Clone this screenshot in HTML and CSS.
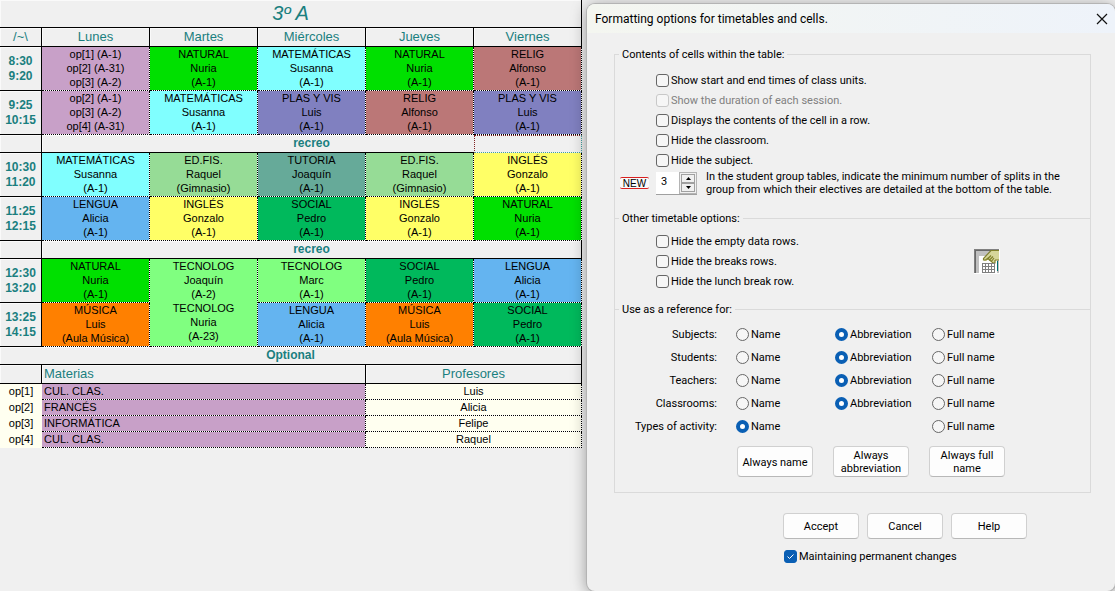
FILE: index.html
```html
<!DOCTYPE html>
<html lang="en">
<head>
<meta charset="utf-8">
<title>Formatting options for timetables and cells.</title>
<link rel="stylesheet" href="styles.css">
</head>
<body>
<main class="desktop">
  <section class="sheet" lang="es">
    <table class="grid">
      <colgroup><col class="col-time"><col><col><col><col><col></colgroup>
      <thead>
        <tr class="title-row"><th colspan="6">3º A</th></tr>
        <tr class="days"><th>/~\</th><th>Lunes</th><th>Martes</th><th>Miércoles</th><th>Jueves</th><th>Viernes</th></tr>
      </thead>
      <tbody>
        <tr class="slot"><th>8:30<br>9:20</th>
          <td class="optional">op[1] (A-1)<br>op[2] (A-31)<br>op[3] (A-2)</td>
          <td class="natural">NATURAL<br>Nuria<br>(A-1)</td>
          <td class="maths">MATEMÁTICAS<br>Susanna<br>(A-1)</td>
          <td class="natural">NATURAL<br>Nuria<br>(A-1)</td>
          <td class="relig">RELIG<br>Alfonso<br>(A-1)</td></tr>
        <tr class="slot"><th>9:25<br>10:15</th>
          <td class="optional">op[2] (A-1)<br>op[3] (A-2)<br>op[4] (A-31)</td>
          <td class="maths">MATEMÁTICAS<br>Susanna<br>(A-1)</td>
          <td class="plastic">PLAS Y VIS<br>Luis<br>(A-1)</td>
          <td class="relig">RELIG<br>Alfonso<br>(A-1)</td>
          <td class="plastic">PLAS Y VIS<br>Luis<br>(A-1)</td></tr>
        <tr class="break"><th></th><th colspan="5" class="has-cursor">recreo<span class="cell-cursor"></span></th></tr>
        <tr class="slot"><th>10:30<br>11:20</th>
          <td class="maths">MATEMÁTICAS<br>Susanna<br>(A-1)</td>
          <td class="sport">ED.FIS.<br>Raquel<br>(Gimnasio)</td>
          <td class="tutor">TUTORIA<br>Joaquín<br>(A-1)</td>
          <td class="sport">ED.FIS.<br>Raquel<br>(Gimnasio)</td>
          <td class="english">INGLÉS<br>Gonzalo<br>(A-1)</td></tr>
        <tr class="slot"><th>11:25<br>12:15</th>
          <td class="lengua">LENGUA<br>Alicia<br>(A-1)</td>
          <td class="english">INGLÉS<br>Gonzalo<br>(A-1)</td>
          <td class="social">SOCIAL<br>Pedro<br>(A-1)</td>
          <td class="english">INGLÉS<br>Gonzalo<br>(A-1)</td>
          <td class="natural">NATURAL<br>Nuria<br>(A-1)</td></tr>
        <tr class="break"><th></th><th colspan="5">recreo</th></tr>
        <tr class="slot"><th>12:30<br>13:20</th>
          <td class="natural">NATURAL<br>Nuria<br>(A-1)</td>
          <td class="tech" rowspan="2">TECNOLOG<br>Joaquín<br>(A-2)<br>TECNOLOG<br>Nuria<br>(A-23)</td>
          <td class="tech">TECNOLOG<br>Marc<br>(A-1)</td>
          <td class="social">SOCIAL<br>Pedro<br>(A-1)</td>
          <td class="lengua">LENGUA<br>Alicia<br>(A-1)</td></tr>
        <tr class="slot"><th>13:25<br>14:15</th>
          <td class="music">MÚSICA<br>Luis<br>(Aula Música)</td>
          <td class="lengua">LENGUA<br>Alicia<br>(A-1)</td>
          <td class="music">MÚSICA<br>Luis<br>(Aula Música)</td>
          <td class="social">SOCIAL<br>Pedro<br>(A-1)</td></tr>
      </tbody>
    </table>
    <table class="grid">
      <colgroup><col class="col-time"><col class="col-subject"><col></colgroup>
      <thead>
        <tr class="break"><th colspan="3">Optional</th></tr>
        <tr class="days"><th></th><th class="start">Materias</th><th>Profesores</th></tr>
      </thead>
      <tbody>
        <tr class="option"><td class="code">op[1]</td><td class="optional start">CUL. CLAS.</td><td class="teacher">Luis</td></tr>
        <tr class="option"><td class="code">op[2]</td><td class="optional start">FRANCÉS</td><td class="teacher">Alicia</td></tr>
        <tr class="option"><td class="code">op[3]</td><td class="optional start">INFORMÁTICA</td><td class="teacher">Felipe</td></tr>
        <tr class="option"><td class="code">op[4]</td><td class="optional start">CUL. CLAS.</td><td class="teacher">Raquel</td></tr>
      </tbody>
    </table>
  </section>

  <section class="dialog" role="dialog" aria-labelledby="dlg-title">
    <header class="titlebar">
      <h1 id="dlg-title">Formatting options for timetables and cells.</h1>
      <button type="button" class="close" aria-label="Close"><svg width="12" height="12" viewBox="0 0 12 12"><path d="M1 1l10 10M11 1L1 11" fill="none" stroke="#111" stroke-width="1.2"/></svg></button>
    </header>
    <form class="form">
      <fieldset class="group contents">
        <legend>Contents of cells within the table:</legend>
        <div class="checks">
          <label class="option-line"><input type="checkbox">Show start and end times of class units.</label>
          <label class="option-line disabled"><input type="checkbox" disabled>Show the duration of each session.</label>
          <label class="option-line"><input type="checkbox">Displays the contents of the cell in a row.</label>
          <label class="option-line"><input type="checkbox">Hide the classroom.</label>
          <label class="option-line"><input type="checkbox">Hide the subject.</label>
        </div>
        <div class="splits">
          <span class="new">NEW</span>
          <div class="spinner">
            <input type="text" id="splits" value="3">
            <div class="arrows">
              <button type="button" aria-label="Increase"><svg width="5" height="3" viewBox="0 0 5 3"><path d="M0 3L2.500 0L5 3z"/></svg></button>
              <button type="button" aria-label="Decrease"><svg width="5" height="3" viewBox="0 0 5 3"><path d="M0 0L2.500 3L5 0z"/></svg></button>
            </div>
          </div>
          <label for="splits" class="splits-text">In the student group tables, indicate the minimum number of splits in the<br>group from which their electives are detailed at the bottom of the table.</label>
        </div>
      </fieldset>
      <fieldset class="group others">
        <legend>Other timetable options:</legend>
        <div class="others-body">
          <div class="checks">
            <label class="option-line"><input type="checkbox">Hide the empty data rows.</label>
            <label class="option-line"><input type="checkbox">Hide the breaks rows.</label>
            <label class="option-line"><input type="checkbox">Hide the lunch break row.</label>
          </div>
          <button type="button" class="table-tool" aria-label="Table format">
            <svg width="26" height="25" viewBox="0 0 26 25" shape-rendering="crispEdges">
              <path fill="#fff" d="M0 0h26v25H0z"/>
              <path fill="#c0c0c0" d="M0 0h25v24H0z"/>
              <path fill="#808080" d="M0 0h25v1H0zM0 0h1v24H0z"/>
              <path fill="#686868" d="M1 1h24v1H1zM1 1h1v23H1z"/>
              <path fill="#fff" d="M5 7h18v17H5z"/>
              <path fill="#007070" d="M23 12h1v10h-1z"/>
              <path fill="#d6d69a" d="M17 2h8v9h-3l-1 3h-3l-3-3-5 1V9l3-2z"/>
              <path fill="none" stroke="#80802c" stroke-width="1.200" shape-rendering="auto" d="M25 1.500h-8L9.500 9.500v1.500h2l4-3M13 10.500l4-4M15 11.500l4-4M17 13l3-4M14 9.500l5 4.500h2v-3M25 11h-4"/>
              <path fill="#808080" d="M8 14h13v10H8z"/>
              <path fill="#fff" d="M9 15h2v2H9zm3 0h2v2h-2zm3 0h2v2h-2zm3 0h2v2h-2zM9 18h2v2H9zm3 0h2v2h-2zm3 0h2v2h-2zm3 0h2v2h-2zM9 21h2v2H9zm3 0h2v2h-2zm3 0h2v2h-2zm3 0h2v2h-2z"/>
            </svg>
          </button>
        </div>
      </fieldset>
      <fieldset class="group reference">
        <legend>Use as a reference for:</legend>
        <div class="choices">
          <div class="choice" role="radiogroup" aria-labelledby="r1"><span id="r1">Subjects:</span>
            <label><input type="radio" name="subjects">Name</label><label><input type="radio" name="subjects" checked>Abbreviation</label><label><input type="radio" name="subjects">Full name</label></div>
          <div class="choice" role="radiogroup" aria-labelledby="r2"><span id="r2">Students:</span>
            <label><input type="radio" name="students">Name</label><label><input type="radio" name="students" checked>Abbreviation</label><label><input type="radio" name="students">Full name</label></div>
          <div class="choice" role="radiogroup" aria-labelledby="r3"><span id="r3">Teachers:</span>
            <label><input type="radio" name="teachers">Name</label><label><input type="radio" name="teachers" checked>Abbreviation</label><label><input type="radio" name="teachers">Full name</label></div>
          <div class="choice" role="radiogroup" aria-labelledby="r4"><span id="r4">Classrooms:</span>
            <label><input type="radio" name="classrooms">Name</label><label><input type="radio" name="classrooms" checked>Abbreviation</label><label><input type="radio" name="classrooms">Full name</label></div>
          <div class="choice" role="radiogroup" aria-labelledby="r5"><span id="r5">Types of activity:</span>
            <label><input type="radio" name="activity" checked>Name</label><label class="last"><input type="radio" name="activity">Full name</label></div>
        </div>
        <div class="presets">
          <button type="button" class="btn">Always name</button>
          <button type="button" class="btn">Always abbreviation</button>
          <button type="button" class="btn">Always full name</button>
        </div>
      </fieldset>
      <div class="actions">
        <button type="submit" class="btn">Accept</button>
        <button type="button" class="btn">Cancel</button>
        <button type="button" class="btn">Help</button>
      </div>
      <label class="option-line keep"><input type="checkbox" checked>Maintaining permanent changes</label>
    </form>
  </section>
</main>
</body>
</html>
```
FILE: styles.css
```css
* {
  box-sizing: border-box;
}

body {
  margin: 0;
  background: #f0f0f0;
  color: #000;
  font: 11px/14px "Liberation Sans", Arial, sans-serif;
}

.desktop {
  display: grid;
  grid-template-columns: 587fr 528fr;
  min-height: 100vh;
  overflow: hidden;
}

.sheet {
  padding-right: 5px;
}

/* Timetable */
.grid {
  width: 100%;
  table-layout: fixed;
  border-collapse: separate;
  border-spacing: 0;
  background: #fff;
}

.col-time {
  width: 42px;
}

.col-subject {
  width: 324px;
}

.grid th,
.grid td {
  padding: 0;
  border: 0 solid #000;
  border-width: 0 1px 1px 0;
  text-align: center;
}

.grid th {
  background: #f0f0f0;
  color: #1a7f7f;
  box-shadow: inset 1px 1px 0 #fafafa;
}

.grid td {
  border-style: dotted;
  background-clip: padding-box;
  vertical-align: top;
}

.grid .start {
  padding-left: 2px;
  text-align: left;
}

.title-row th {
  height: 28px;
  font-size: 20px;
  font-style: italic;
  font-weight: normal;
  line-height: 27px;
}

.days th {
  height: 19px;
  font-size: 13px;
  font-weight: normal;
  line-height: 18px;
}

.slot {
  height: 44px;
}

.slot th {
  font-size: 12px;
  line-height: 15px;
}

.break th {
  height: 18px;
  font-size: 12px;
  line-height: 17px;
}

.option {
  height: 16px;
}

.grid .code {
  border: 0;
  background: #fffff0;
}

.grid .has-cursor {
  position: relative;
}

.cell-cursor {
  position: absolute;
  top: 0;
  right: -1px;
  bottom: -1px;
  width: 20%;
  border: 1px dotted #802020;
  border-right-color: #40a0a0;
  border-bottom-color: #40a0a0;
  background: #f0f0f0;
}

.optional { background-color: #c8a0c8; }
.natural { background-color: #00e000; }
.maths { background-color: #80ffff; }
.relig { background-color: #bb7777; }
.plastic { background-color: #8080c0; }
.sport { background-color: #96dc96; }
.tutor { background-color: #66aa99; }
.english { background-color: #ffff66; }
.lengua { background-color: #64b4f0; }
.social { background-color: #00b95c; }
.tech { background-color: #80ff80; }
.music { background-color: #ff8000; }
.teacher { background-color: #fffff0; }

/* Dialog */
.dialog {
  position: relative;
  margin-top: 4px;
  border-radius: 8px;
  background: #f0f0f0;
  box-shadow: 0 0 0 1px #b4b4b4, 0 2px 16px rgba(0, 0, 0, 0.4);
  font-family: Roboto, Tahoma, sans-serif;
}

.titlebar {
  display: flex;
  align-items: center;
  justify-content: space-between;
  height: 29px;
  padding: 0 7px 0 8px;
  border-radius: 8px 8px 0 0;
  background: linear-gradient(90deg, #f4f6f0, #eef3fa);
}

.titlebar h1 {
  margin: 0;
  font: 12px/16px Roboto, "Segoe UI", sans-serif;
}

.close {
  display: flex;
  padding: 0;
  border: 0;
  background: none;
}

.form {
  padding: 14px 24px 0 27px;
}

.group {
  min-width: 0;
  margin: 0;
  padding: 0;
  border: 1px solid #dadada;
}

.group legend {
  margin-left: 4px;
  padding: 0 3px;
  line-height: 15px;
}

.contents {
  height: 171px;
  border-bottom: 0;
}

.others {
  height: 98px;
  margin-top: -7px;
  border-bottom: 0;
}

.reference {
  height: 191px;
  margin-top: -7px;
}

.checks {
  padding: 8px 0 0 41px;
}

.others .checks {
  padding-top: 5px;
}

.option-line {
  display: flex;
  align-items: center;
  gap: 2px;
  height: 20px;
  padding-top: 1px;
  line-height: 15px;
}

.disabled {
  color: #808080;
}

input[type="checkbox"],
input[type="radio"] {
  appearance: none;
  flex: none;
  width: 13px;
  height: 13px;
  margin: 0;
  border: 1px solid #666;
  border-radius: 3px;
  background: #f6f6f6;
}

input[type="checkbox"]:disabled {
  border-color: #c8c8c8;
}

input[type="checkbox"]:checked {
  border-color: #0a5fb4;
  background: #0a5fb4 url("data:image/svg+xml,%3Csvg xmlns='http://www.w3.org/2000/svg' viewBox='0 0 11 11'%3E%3Cpath d='M2.500 5.500l2 2 4-4' fill='none' stroke='white'/%3E%3C/svg%3E");
}

input[type="radio"] {
  border-radius: 50%;
}

input[type="radio"]:checked {
  border: 4px solid #0a5fb4;
  background: #fff;
}

.splits {
  display: flex;
  align-items: center;
  padding: 0 0 0 5px;
}

.new {
  width: 29px;
  padding-top: 1px;
  border: solid #d82020;
  border-width: 1px 0;
  border-radius: 2px;
  background: #fafafa;
  font: 10px/9px "Liberation Sans", Arial, sans-serif;
  text-align: center;
}

.spinner {
  display: flex;
  width: 41px;
  height: 23px;
  margin: 0 9px 0 7px;
  border-bottom: 1px solid #a0a0a0;
}

.spinner input {
  width: 23px;
  min-width: 0;
  padding: 0 0 2px 5px;
  border: 0;
  background: #fff;
  font: inherit;
}

.arrows {
  display: grid;
  flex: 1;
  padding: 1px;
  border: 1px solid #b4b4b4;
}

.arrows button {
  display: flex;
  align-items: center;
  justify-content: center;
  min-height: 0;
  padding: 0;
  border: 1px solid #a0a0a0;
  background: #f0f0f0;
}

.splits-text {
  line-height: 13px;
}

.others-body {
  display: flex;
}

.others .checks {
  width: 359px;
}

.table-tool {
  height: 25px;
  margin-top: 23px;
  padding: 0;
  border: 0;
  background: none;
}

.table-tool svg {
  display: block;
}

.choices {
  padding-top: 6px;
}

.choice {
  display: grid;
  grid-template-columns: 102px 99px 97px 97px;
  align-items: center;
  height: 23px;
  line-height: 15px;
}

.choice span {
  text-align: right;
}

.choice label {
  display: flex;
  align-items: center;
  gap: 2px;
  margin-left: 19px;
  white-space: nowrap;
}

.choice .last {
  grid-column: 4;
}

.presets {
  display: flex;
  gap: 20px;
  padding: 8px 0 0 122px;
}

.btn {
  width: 76px;
  padding: 1px 0 0;
  border: 1px solid #d0d0d0;
  border-bottom-color: #b8b8b8;
  border-radius: 4px;
  background: #fdfdfd;
  font: inherit;
}

.presets .btn {
  height: 31px;
  line-height: 13px;
}

.actions {
  display: flex;
  gap: 8px;
  padding: 20px 0 0 169px;
}

.actions .btn {
  height: 26px;
}

.keep {
  margin: 7px 0 0 170px;
}
```
